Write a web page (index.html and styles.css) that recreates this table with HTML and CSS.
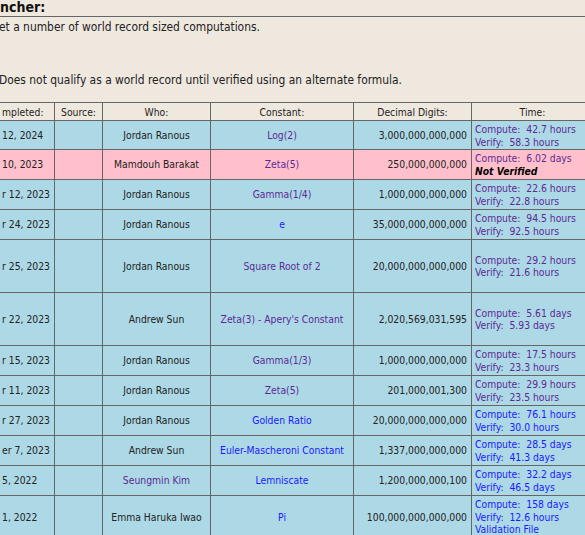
FILE: index.html
```html
<!DOCTYPE html>
<html>
<head>
<meta charset="utf-8">
<link rel="stylesheet" href="styles.css">
</head>
<body>
<h2 class="title">ncher:</h2>
<p class="intro">et a number of world record sized computations.</p>
<p class="note">Does not qualify as a world record until verified using an alternate formula.</p>
<table class="records">
  <colgroup>
    <col class="c-date"><col class="c-src"><col class="c-who"><col class="c-const"><col class="c-digits"><col class="c-time">
  </colgroup>
  <thead>
    <tr><th class="date">mpleted:</th><th>Source:</th><th>Who:</th><th>Constant:</th><th>Decimal Digits:</th><th>Time:</th></tr>
  </thead>
  <tbody>
    <tr class="ok first">
      <td class="date d42">12, 2024</td><td></td><td class="who">Jordan Ranous</td>
      <td class="const"><a class="v" href="#">Log(2)</a></td><td class="digits">3,000,000,000,000</td>
      <td class="time"><a class="v" href="#">Compute:&nbsp; 42.7 hours<br>Verify:&nbsp; 58.3 hours</a></td>
    </tr>
    <tr class="unverified">
      <td class="date d41">10, 2023</td><td></td><td class="who">Mamdouh Barakat</td>
      <td class="const"><a class="v" href="#">Zeta(5)</a></td><td class="digits">250,000,000,000</td>
      <td class="time"><a class="v" href="#">Compute:&nbsp; 6.02 days</a><br><b><i>Not Verified</i></b></td>
    </tr>
    <tr class="ok">
      <td class="date">r 12, 2023</td><td></td><td class="who">Jordan Ranous</td>
      <td class="const"><a class="v" href="#">Gamma(1/4)</a></td><td class="digits">1,000,000,000,000</td>
      <td class="time"><a class="v" href="#">Compute:&nbsp; 22.6 hours<br>Verify:&nbsp; 22.8 hours</a></td>
    </tr>
    <tr class="ok">
      <td class="date">r 24, 2023</td><td></td><td class="who">Jordan Ranous</td>
      <td class="const"><a class="n" href="#">e</a></td><td class="digits">35,000,000,000,000</td>
      <td class="time"><a class="v" href="#">Compute:&nbsp; 94.5 hours<br>Verify:&nbsp; 92.5 hours</a></td>
    </tr>
    <tr class="ok tall">
      <td class="date">r 25, 2023</td><td></td><td class="who">Jordan Ranous</td>
      <td class="const"><a class="v" href="#">Square Root of 2</a></td><td class="digits">20,000,000,000,000</td>
      <td class="time"><a class="v" href="#">Compute:&nbsp; 29.2 hours<br>Verify:&nbsp; 21.6 hours</a></td>
    </tr>
    <tr class="ok tall">
      <td class="date">r 22, 2023</td><td></td><td class="who">Andrew Sun</td>
      <td class="const"><a class="v" href="#">Zeta(3) - Apery's Constant</a></td><td class="digits">2,020,569,031,595</td>
      <td class="time"><a class="v" href="#">Compute:&nbsp; 5.61 days<br>Verify:&nbsp; 5.93 days</a></td>
    </tr>
    <tr class="ok">
      <td class="date">r 15, 2023</td><td></td><td class="who">Jordan Ranous</td>
      <td class="const"><a class="v" href="#">Gamma(1/3)</a></td><td class="digits">1,000,000,000,000</td>
      <td class="time"><a class="v" href="#">Compute:&nbsp; 17.5 hours<br>Verify:&nbsp; 23.3 hours</a></td>
    </tr>
    <tr class="ok">
      <td class="date">r 11, 2023</td><td></td><td class="who">Jordan Ranous</td>
      <td class="const"><a class="v" href="#">Zeta(5)</a></td><td class="digits">201,000,001,300</td>
      <td class="time"><a class="v" href="#">Compute:&nbsp; 29.9 hours<br>Verify:&nbsp; 23.5 hours</a></td>
    </tr>
    <tr class="ok">
      <td class="date">r 27, 2023</td><td></td><td class="who">Jordan Ranous</td>
      <td class="const"><a class="n" href="#">Golden Ratio</a></td><td class="digits">20,000,000,000,000</td>
      <td class="time"><a class="n" href="#">Compute:&nbsp; 76.1 hours<br>Verify:&nbsp; 30.0 hours</a></td>
    </tr>
    <tr class="ok">
      <td class="date">er 7, 2023</td><td></td><td class="who">Andrew Sun</td>
      <td class="const"><a class="n" href="#">Euler-Mascheroni Constant</a></td><td class="digits">1,337,000,000,000</td>
      <td class="time"><a class="n" href="#">Compute:&nbsp; 28.5 days<br>Verify:&nbsp; 41.3 days</a></td>
    </tr>
    <tr class="ok">
      <td class="date d31">5, 2022</td><td></td><td class="who"><a class="v" href="#">Seungmin Kim</a></td>
      <td class="const"><a class="n" href="#">Lemniscate</a></td><td class="digits">1,200,000,000,100</td>
      <td class="time"><a class="n" href="#">Compute:&nbsp; 32.2 days<br>Verify:&nbsp; 46.5 days</a></td>
    </tr>
    <tr class="ok">
      <td class="date d36">1, 2022</td><td></td><td class="who">Emma Haruka Iwao</td>
      <td class="const"><a class="n" href="#">Pi</a></td><td class="digits">100,000,000,000,000</td>
      <td class="time"><a class="n" href="#">Compute:&nbsp; 158 days<br>Verify:&nbsp; 12.6 hours<br>Validation File</a></td>
    </tr>
  </tbody>
</table>
</body>
</html>
```

FILE: styles.css
```css
html {
  overflow: hidden;
  background: #efe8df;
}
body {
  margin: 0;
  font-family: "DejaVu Sans Condensed", "DejaVu Sans", sans-serif;
  font-size: 10.3px;
  color: #222;
}
.title {
  margin: -2px 0 0;
  font-size: 14px;
  line-height: 18px;
  font-weight: bold;
  color: #111;
  border-bottom: 1px solid #666;
}
.intro {
  margin: 3px 0 0;
  font-size: 11.9px;
  line-height: 14px;
  text-indent: -1px;
}
.note {
  margin: 39px 0 0;
  font-size: 11.9px;
  line-height: 14px;
  text-indent: -1px;
}
.records {
  margin-top: 15px;
  margin-left: -2px;
  border-collapse: collapse;
  table-layout: fixed;
  width: 595px;
}
.c-date { width: 56px; }
.c-src { width: 48px; }
.c-who { width: 108px; }
.c-const { width: 143px; }
.c-digits { width: 118px; }
.c-time { width: 122px; }

.records th,
.records td {
  border: 1px solid #666;
  padding: 2px 3px;
  line-height: 12.5px;
  vertical-align: middle;
  white-space: nowrap;
  overflow: hidden;
}
.records th {
  font-weight: normal;
  background: #efe8df;
  text-align: center;
  padding: 3px 3px 2px;
  line-height: 12px;
}
.records th.date {
  text-align: right;
  padding-right: 15px;
}
.ok td { background: #add8e6; }
.unverified td { background: #ffc0cb; }
.tall td { height: 48px; }
.records .first td { padding-bottom: 1px; }

.records td.date {
  text-align: right;
  padding-right: 9px;
}
.records td.d42 { padding-right: 12px; }
.records td.d41 { padding-right: 13px; }
.records td.d31 { padding-right: 23px; }
.records td.d36 { padding-right: 18px; }

.who, .const { text-align: center; }
.digits { text-align: right; }
.records td.digits { padding-right: 4px; }
.records td.time { padding-left: 3px; }

a { text-decoration: none; }
a.v { color: #5b2a95; }
a.n { color: #1a1aff; }
.time b { color: #000; }
```
